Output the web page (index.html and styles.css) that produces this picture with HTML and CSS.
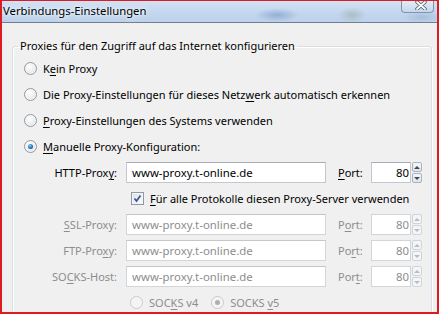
FILE: index.html
```html
<!DOCTYPE html>
<html lang="de">
<head>
  <meta charset="UTF-8">
  <title>Verbindungs-Einstellungen</title>
  <link rel="stylesheet" href="styles.css">
</head>
<body>
  <div class="window">
    <div class="titlebar">
      <span class="title">Verbindungs-Einstellungen</span>
      <div class="close">
        <svg width="12" height="9" viewBox="0 0 12 9">
          <path d="M2 1 L10 8 M10 1 L2 8" stroke="#4a5568" stroke-width="3.4" stroke-linecap="round"/>
          <path d="M2 1 L10 8 M10 1 L2 8" stroke="#fff" stroke-width="1.8" stroke-linecap="round"/>
        </svg>
      </div>
    </div>

    <div class="client">
      <fieldset class="group">
        <legend>Proxies für den Zugriff auf das Internet konfigurieren</legend>

        <label class="option"><span class="radio"></span><span>K<u>e</u>in Proxy</span></label>
        <label class="option"><span class="radio"></span><span>Die Proxy-Einstellungen für dieses Netz<u>w</u>erk automatisch erkennen</span></label>
        <label class="option"><span class="radio"></span><span><u>P</u>roxy-Einstellungen des Systems verwenden</span></label>
        <label class="option"><span class="radio checked"></span><span><u>M</u>anuelle Proxy-Konfiguration:</span></label>

        <div class="manual">
          <span class="lbl">HTTP-Prox<u>y</u>:</span>
          <div class="field">www-proxy.t-online.de</div>
          <span class="port-lbl"><u>P</u>ort:</span>
          <div class="spin">
            <div class="num">80</div>
            <div class="arrows"><span class="up"></span><span class="down"></span></div>
          </div>

          <label class="share"><span class="check"></span><span><u>F</u>ür alle Protokolle diesen Proxy-Server verwenden</span></label>

          <span class="lbl off"><u>S</u>SL-Proxy:</span>
          <div class="field off">www-proxy.t-online.de</div>
          <span class="port-lbl off">P<u>o</u>rt:</span>
          <div class="spin off">
            <div class="num">80</div>
            <div class="arrows"><span class="up"></span><span class="down"></span></div>
          </div>

          <span class="lbl off">FTP-Pro<u>x</u>y:</span>
          <div class="field off">www-proxy.t-online.de</div>
          <span class="port-lbl off">Po<u>r</u>t:</span>
          <div class="spin off">
            <div class="num">80</div>
            <div class="arrows"><span class="up"></span><span class="down"></span></div>
          </div>

          <span class="lbl off">SO<u>C</u>KS-Host:</span>
          <div class="field off">www-proxy.t-online.de</div>
          <span class="port-lbl off">Por<u>t</u>:</span>
          <div class="spin off">
            <div class="num">80</div>
            <div class="arrows"><span class="up"></span><span class="down"></span></div>
          </div>

          <div class="socks">
            <label class="option off"><span class="radio off"></span><span>SOC<u>K</u>S v4</span></label>
            <label class="option off"><span class="radio off checked"></span><span>SOCKS <u>v</u>5</span></label>
          </div>
        </div>
      </fieldset>
    </div>
  </div>
</body>
</html>
```

FILE: styles.css
```css
body {
  margin: 0;
  font-family: "Noto Sans", "Open Sans", sans-serif;
  font-size: 11px;
  color: #000;
}
.window {
  width: 439px;
  height: 314px;
  box-sizing: border-box;
  border: 2px solid #dc1b22;
  border-top-width: 1px;
  background: #f0f0f0;
  overflow: hidden;
  display: flex;
  flex-direction: column;
}
u {
  text-decoration-thickness: 1px;
  text-underline-offset: 2px;
}

/* title bar */
.titlebar {
  height: 21px;
  flex: none;
  display: flex;
  justify-content: space-between;
  align-items: flex-start;
  border-bottom: 1px solid #6f7e90;
  background:
    radial-gradient(ellipse 22px 7px at 275px 14px, rgba(110,145,195,0.55), rgba(110,145,195,0)),
    radial-gradient(ellipse 14px 8px at 350px 14px, rgba(150,160,150,0.45), rgba(150,160,150,0)),
    radial-gradient(ellipse 20px 6px at 420px 16px, rgba(120,150,190,0.35), rgba(120,150,190,0)),
    linear-gradient(#d3e2f4, #c2d6ee 60%, #bdd2ea);
}
.title {
  padding: 2px 0 0 1px;
  font-size: 11.3px;
  line-height: 16px;
  text-shadow: 0 0 6px #fff, 0 0 3px #fff;
}
.close {
  width: 33px;
  height: 12px;
  margin-right: 3px;
  border: 1px solid #8593a6;
  border-top: none;
  border-radius: 0 0 4px 4px;
  background: linear-gradient(rgba(255,255,255,0.35), rgba(200,215,235,0.4));
  display: flex;
  justify-content: flex-end;
  align-items: flex-start;
  padding-right: 6px;
  box-sizing: border-box;
}

/* group box */
.client {
  flex: 1;
}
.group {
  margin: 15px 5px 0 10px;
  padding: 1px 0 0 11px;
  border: 1px solid #d5dfe5;
  border-radius: 3px;
  box-shadow: inset 1px 1px #fff, 1px 1px #fff;
  height: 300px;
  box-sizing: border-box;
}
.group legend {
  margin-left: -6px;
  padding: 0 2px;
  line-height: 16px;
}

.option {
  display: flex;
  align-items: center;
  height: 26px;
  white-space: nowrap;
}
.radio {
  flex: none;
  width: 13px;
  height: 13px;
  box-sizing: border-box;
  border-radius: 50%;
  margin-right: 6px;
  border: 1px solid #8e9aa5;
  background: radial-gradient(circle at 40% 35%, #fff 0, #f4f4f4 35%, #d4d6d9 100%);
  box-shadow: inset 0 0 0 1px #f6f6f6;
  display: flex;
  align-items: center;
  justify-content: center;
}
.radio.checked::after {
  content: "";
  width: 5px;
  height: 5px;
  border-radius: 50%;
  background: radial-gradient(circle at 40% 35%, #8fd0f7 0, #1f72b6 55%, #0c3a6a 100%);
}
.radio.off {
  border-color: #c8c9ca;
  background: #f4f4f4;
}
.radio.off.checked::after {
  background: #adb0b3;
}

/* manual settings */
.manual {
  display: grid;
  grid-template-columns: 102px 212px 33px 51px;
  grid-auto-rows: 21px;
  row-gap: 5px;
  margin-top: 3px;
  align-items: center;
}
.lbl {
  text-align: right;
  padding-right: 9px;
  white-space: nowrap;
}
.off {
  color: #8d8d8d;
}
.field {
  width: 200px;
  height: 21px;
  box-sizing: border-box;
  border: 1px solid #c3c7cf;
  border-top-color: #abadb3;
  background: #fff;
  padding-left: 5px;
  font-size: 11.4px;
  line-height: 19px;
  white-space: nowrap;
}
.field.off {
  border-color: #d3d6d9;
  border-top-color: #c3c7ca;
}
.port-lbl {
  white-space: nowrap;
}
.spin {
  display: flex;
  height: 21px;
}
.num {
  width: 40px;
  box-sizing: border-box;
  border: 1px solid #c3c7cf;
  border-top-color: #abadb3;
  background: #fff;
  text-align: right;
  padding-right: 1px;
  font-size: 11.4px;
  line-height: 19px;
}
.spin.off .num {
  border-color: #d3d6d9;
}
.arrows {
  width: 10px;
  margin-left: 1px;
  display: flex;
  flex-direction: column;
  gap: 1px;
}
.arrows span {
  flex: 1;
  border: 1px solid #a9b2bd;
  border-radius: 2px;
  background: linear-gradient(#f6f7f9, #dfe3e8);
  display: flex;
  align-items: center;
  justify-content: center;
}
.spin.off .arrows span {
  border-color: #d0d4d8;
  background: #f4f5f6;
}
.arrows .up::after,
.arrows .down::after {
  content: "";
  border-left: 3px solid transparent;
  border-right: 3px solid transparent;
}
.arrows .up::after {
  border-bottom: 3px solid #3e4a5a;
}
.arrows .down::after {
  border-top: 3px solid #3e4a5a;
}
.spin.off .arrows .up::after {
  border-bottom-color: #b6bcc2;
}
.spin.off .arrows .down::after {
  border-top-color: #b6bcc2;
}

.share {
  grid-column: 2 / 5;
  display: flex;
  align-items: center;
  padding-left: 5px;
  white-space: nowrap;
}
.check {
  flex: none;
  width: 13px;
  height: 13px;
  box-sizing: border-box;
  border: 1px solid #8e9aa5;
  margin-right: 6px;
  background:
    url("data:image/svg+xml,%3Csvg xmlns='http://www.w3.org/2000/svg' width='11' height='11'%3E%3Cpath d='M2.5 5.5 L4.5 8 L8.5 2.5' fill='none' stroke='%233c5a9a' stroke-width='1.8'/%3E%3C/svg%3E") center no-repeat,
    linear-gradient(135deg, #dcdfe3, #fff);
  box-shadow: inset 0 0 0 1px #f4f4f4;
}

.socks {
  grid-column: 2 / 5;
  display: flex;
  padding-left: 4px;
}
.socks .option {
  height: 21px;
  margin-right: 13px;
}
```
